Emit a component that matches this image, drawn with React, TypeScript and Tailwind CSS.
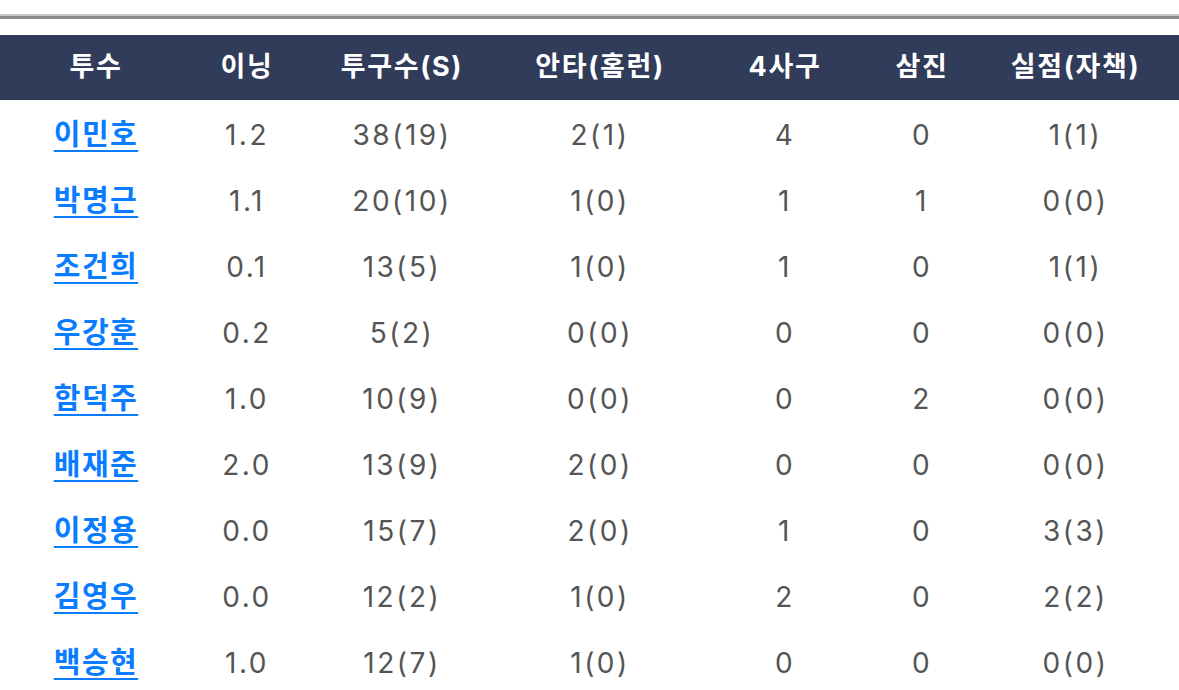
import React from "react";

const rows: string[][] = [
  ["이민호", "1.2", "38(19)", "2(1)", "4", "0", "1(1)"],
  ["박명근", "1.1", "20(10)", "1(0)", "1", "1", "0(0)"],
  ["조건희", "0.1", "13(5)", "1(0)", "1", "0", "1(1)"],
  ["우강훈", "0.2", "5(2)", "0(0)", "0", "0", "0(0)"],
  ["함덕주", "1.0", "10(9)", "0(0)", "0", "2", "0(0)"],
  ["배재준", "2.0", "13(9)", "2(0)", "0", "0", "0(0)"],
  ["이정용", "0.0", "15(7)", "2(0)", "1", "0", "3(3)"],
  ["김영우", "0.0", "12(2)", "1(0)", "2", "0", "2(2)"],
  ["백승현", "1.0", "12(7)", "1(0)", "0", "0", "0(0)"],
];

const headers = ["투수", "이닝", "투구수(S)", "안타(홈런)", "4사구", "삼진", "실점(자책)"];

const grid = "grid grid-cols-[192px_110px_200px_196px_174px_100px_1fr]";

export default function App() {
  return (
    <div
      className="w-[1179px] h-[690px] overflow-hidden bg-white"
      style={{ fontFamily: 'Inter, "Noto Sans CJK KR", "Noto Sans", sans-serif' }}
    >
      <div className="pt-[14px]">
        <div className="h-[2px] bg-[#c6c6c6]" />
        <div className="h-[3px] bg-[#8a8a8a]" />
      </div>
      <div className="mt-[16px]">
        <div className={`${grid} h-[65px] bg-[#313b5a] items-center text-white font-bold text-[27px] tracking-[0.06em]`}>
          {headers.map((h) => (
            <div key={h} className="text-center">
              {h}
            </div>
          ))}
        </div>
        {rows.map((r) => (
          <div key={r[0]} className={`${grid} h-[66px] items-center pt-[3px] text-[28px] text-[#555555] tracking-[0.09em]`}>
            {r.map((c, i) =>
              i === 0 ? (
                <div key={i} className="text-center">
                  <a className="text-[#0a7cff] font-bold text-[29px] tracking-[0.05em] underline underline-offset-[5px] decoration-[2px]">{c}</a>
                </div>
              ) : (
                <div key={i} className="text-center">
                  {c}
                </div>
              )
            )}
          </div>
        ))}
      </div>
    </div>
  );
}
